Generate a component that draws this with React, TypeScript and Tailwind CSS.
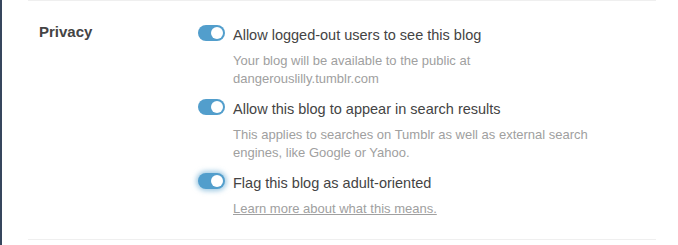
import type { ReactNode } from 'react';

type ToggleProps = {
  focused?: boolean;
};

function Toggle({ focused = false }: ToggleProps) {
  return (
    <span
      className={
        'relative flex h-4 w-[27px] shrink-0 items-center justify-end rounded-full bg-[#529ecc] pr-[2px] ' +
        (focused ? 'shadow-[0_0_5px_2px_rgba(82,158,204,0.55)]' : '')
      }
    >
      <span className="block h-3 w-3 rounded-full bg-white" />
    </span>
  );
}

type OptionProps = {
  label: string;
  focused?: boolean;
  children: ReactNode;
};

function Option({ label, focused, children }: OptionProps) {
  return (
    <div className="flex flex-col">
      <label className="flex items-start gap-2 cursor-pointer">
        <Toggle focused={focused} />
        <span className="text-[14.5px] leading-5 text-[#444]">{label}</span>
      </label>
      <div className="mt-[7px] max-w-[410px] pl-[35px] text-[13px] leading-[18px] text-[#a0a0a0]">
        {children}
      </div>
    </div>
  );
}

export default function App() {
  return (
    <div
      className="flex h-[245px] w-full border-l-2 border-[#36465d] bg-white"
      style={{ fontFamily: '"Liberation Sans", Arial, sans-serif' }}
    >
      <section className="ml-[26px] mr-[22px] flex h-[240px] flex-1 items-start border-y border-[#efefef] pt-[21px]">
        <h3 className="w-[170px] shrink-0 pl-[11px] text-[15px] font-bold leading-5 text-[#444]">
          Privacy
        </h3>
        <div className="mt-[3px] flex flex-col gap-[11px]">
          <Option label="Allow logged-out users to see this blog">
            Your blog will be available to the public at dangerouslilly.tumblr.com
          </Option>
          <Option label="Allow this blog to appear in search results">
            This applies to searches on Tumblr as well as external search engines, like Google
            or Yahoo.
          </Option>
          <Option label="Flag this blog as adult-oriented" focused>
            <a href="#" className="underline">
              Learn more about what this means.
            </a>
          </Option>
        </div>
      </section>
    </div>
  );
}
